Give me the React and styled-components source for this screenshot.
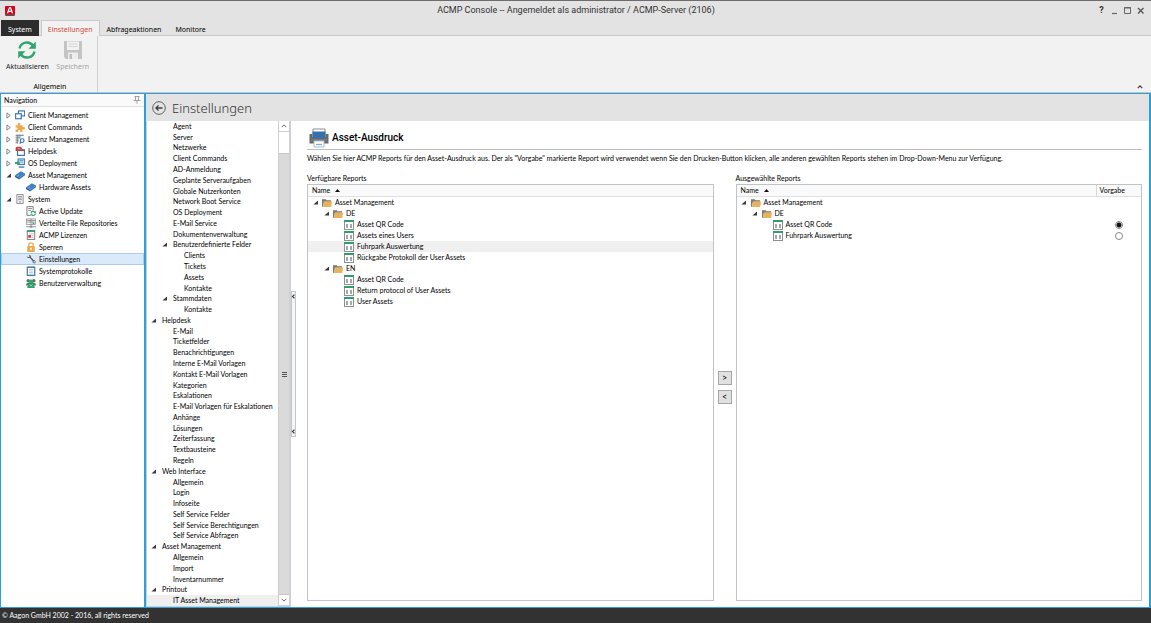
import React, { useState } from 'react'
import styled, { createGlobalStyle } from 'styled-components'

const GlobalStyle = createGlobalStyle`
  * {
    box-sizing: border-box;
  }
  body {
    margin: 0;
    font-family: Lato, sans-serif;
    font-size: 7px;
    line-height: 11px;
    color: #000;
  }
  button {
    font: inherit;
    color: inherit;
    border: 0;
    padding: 0;
    background: none;
  }
  a {
    color: inherit;
    text-decoration: none;
  }
  svg {
    display: block;
    flex: none;
  }
  ul {
    list-style: none;
    margin: 0;
    padding: 0;
  }
`

/* ---------- icons ---------- */

const Svg = ({ size = 10, width, box = 16, children }) => (
  <svg width={width || size} height={size} viewBox={`0 0 ${box} ${box}`} fill="none" aria-hidden="true">
    {children}
  </svg>
)

const LogoIcon = () => (
  <Svg size={10}>
    <rect x="0" y="0" width="16" height="16" rx="2" fill="#6d4a4c" />
    <rect x="0" y="0" width="16" height="13" rx="2" fill="#e2001a" />
    <path d="M4 11.500L7.200 2.500H8.800L12 11.500M5.300 8.500H10.700" stroke="#fff" strokeWidth="2" />
  </Svg>
)

const RefreshIcon = () => (
  <Svg size={20} box={20}>
    <path d="M2.500 8.500A7.600 7.600 0 0 1 16 5.500" stroke="#2fa56f" strokeWidth="2.400" />
    <path d="M18.800 1.500V8.800H11.500Z" fill="#2fa56f" />
    <path d="M17.500 11.500A7.600 7.600 0 0 1 4 14.500" stroke="#2fa56f" strokeWidth="2.400" />
    <path d="M1.200 18.500V11.200H8.500Z" fill="#2fa56f" />
  </Svg>
)

const SaveIcon = () => (
  <Svg size={20} box={20}>
    <path d="M1 1H19V19H3L1 17Z" fill="#c4c4c4" />
    <rect x="4" y="1.500" width="12" height="8.500" fill="#f2f2f2" />
    <path d="M5.500 4H14.500M5.500 6.500H14.500" stroke="#d4d4d4" />
    <rect x="5" y="12.500" width="10" height="6.500" fill="#ededed" />
    <rect x="6.500" y="14" width="2.500" height="5" fill="#bdbdbd" />
  </Svg>
)

const WindowsIcon = () => (
  <Svg>
    <rect x="5.500" y="1.500" width="10" height="8" fill="#fff" stroke="#2f70b5" strokeWidth="1.800" />
    <rect x="1" y="6" width="9" height="8" fill="#fff" stroke="#2f70b5" strokeWidth="1.800" />
  </Svg>
)

const PuzzleIcon = () => (
  <Svg>
    <path d="M1 5H5C4 2.500 4.800 1 6.500 1S9 2.500 8 5H12V8.500C14 7.500 16 8 16 10S14 12.500 12 11.500V16H8.500C9.200 13.500 8 12.800 6.800 12.800S4.500 13.500 5.200 16H1V12C3 12.500 4 11.800 4 10.500S3 8.500 1 9Z" fill="#eba94b" />
  </Svg>
)

const LicenseIcon = () => (
  <Svg>
    <path d="M1 2H14M1 5H8M1 8H6M1 11H6M1 14H5" stroke="#5d6670" strokeWidth="1.500" />
    <path d="M4 1V15M8 1V8" stroke="#7a828a" strokeWidth="1.200" />
    <circle cx="11.500" cy="10.500" r="3" stroke="#2f70b5" strokeWidth="1.800" />
    <path d="M9.500 13L7.500 15.500" stroke="#2f70b5" strokeWidth="1.800" />
  </Svg>
)

const HelpdeskIcon = () => (
  <Svg>
    <rect x="4" y="6" width="11" height="9" fill="#fff" stroke="#2f70b5" strokeWidth="1.800" />
    <path d="M1 8V3.500C1 1.500 3 1 6 1S11 1.500 11 3.500V5H7.500V4H4.500V8Z" fill="#d43b34" />
    <path d="M4 7H15" stroke="#d43b34" strokeWidth="2" />
  </Svg>
)

const DeployIcon = () => (
  <Svg>
    <rect x="5" y="1.500" width="10" height="9" fill="#dcebf7" stroke="#2f70b5" strokeWidth="1.600" />
    <path d="M7 4H13M7 6.500H13" stroke="#2f70b5" />
    <path d="M6 14.500H15" stroke="#2f70b5" strokeWidth="2" />
    <path d="M0 6.500H4V4L8.500 8L4 12V9.500H0Z" fill="#2fa56f" />
  </Svg>
)

const AssetIcon = () => (
  <Svg>
    <path d="M0 8.500L9.500 2L16 5.500L6.500 12.500Z" fill="#3f81c4" />
    <path d="M0 8.500L6.500 12.500V15L0 11Z" fill="#245d97" />
    <path d="M6.500 12.500L16 5.500V8.500L6.500 15Z" fill="#2f70b5" />
    <path d="M3.500 10L6.500 8" stroke="#b7d3ee" />
  </Svg>
)

const ServerIcon = () => (
  <Svg>
    <rect x="3" y="1" width="10" height="14" fill="#f4f4f4" stroke="#77797c" strokeWidth="1.300" />
    <path d="M5 4H11M5 6.500H11M5 9H11" stroke="#77797c" strokeWidth="1.200" />
    <rect x="7" y="11.500" width="2" height="2" fill="#77797c" />
  </Svg>
)

const UpdateIcon = () => (
  <Svg>
    <path d="M7 15H1.500V1H11.500V7" fill="#fff" stroke="#6a6d70" strokeWidth="1.400" />
    <path d="M3.500 4H9.500M3.500 7H8" stroke="#6a6d70" strokeWidth="1.200" />
    <path d="M8 11.500A3.500 3.500 0 0 1 14 9.500M15 12A3.500 3.500 0 0 1 9 14" stroke="#2fa56f" strokeWidth="1.800" />
    <path d="M15.800 7.500V11H12.300ZM7.300 16V12.500H10.800Z" fill="#2fa56f" />
  </Svg>
)

const RepositoriesIcon = () => (
  <Svg>
    <rect x="1" y="1.500" width="8" height="9" fill="#f4f4f4" stroke="#77797c" />
    <rect x="8" y="1.500" width="7" height="9" fill="#f4f4f4" stroke="#77797c" />
    <path d="M2 4H14M2 6.500H14" stroke="#77797c" strokeWidth="1.200" />
    <rect x="10.500" y="7.500" width="3" height="2" fill="#2fa56f" />
    <path d="M8 10.500V14M0 14H16" stroke="#77797c" strokeWidth="1.300" />
    <rect x="6" y="12.500" width="4" height="3" fill="#8d9093" />
  </Svg>
)

const LicenseDocIcon = () => (
  <Svg>
    <rect x="2" y="1" width="12" height="14" fill="#fff" stroke="#6a6d70" strokeWidth="1.400" />
    <path d="M1.500 2H14.500" stroke="#2fa56f" strokeWidth="2.500" />
    <path d="M5 6H12M9 9H12M9 12H12" stroke="#a9abad" strokeWidth="1.200" />
    <rect x="3.500" y="8" width="4.500" height="4.500" fill="#d9433b" />
  </Svg>
)

const LockIcon = () => (
  <Svg>
    <path d="M4.500 7V4.500C4.500 2.500 6 1.200 8 1.200S11.500 2.500 11.500 4.500V7" stroke="#eba94b" strokeWidth="2" />
    <rect x="2" y="6.500" width="12" height="9.500" rx="1" fill="#eba94b" />
    <rect x="7" y="9" width="2" height="4" fill="#fff" />
  </Svg>
)

const WrenchIcon = () => (
  <Svg>
    <path d="M1 3.500C1.500 6 4 7 6 6L13 14L15 12.500L8 5C8.500 3 7 1 4.500 1L6 3.500L4 5Z" fill="#55585b" />
    <circle cx="13" cy="12.500" r="1.900" fill="#dbeafa" stroke="#55585b" strokeWidth="1.300" />
  </Svg>
)

const LogIcon = () => (
  <Svg>
    <rect x="2" y="2" width="12" height="13" fill="#fff" stroke="#2f70b5" strokeWidth="1.800" />
    <path d="M5 5.500H11M5 8H11M5 10.500H11M5 13H11" stroke="#9aa7b4" />
    <path d="M4.500 0.500V3M8 0.500V3M11.500 0.500V3" stroke="#4a5560" strokeWidth="1.400" />
  </Svg>
)

const UsersIcon = () => (
  <Svg>
    <circle cx="3.500" cy="4.500" r="2.800" fill="#55796a" />
    <circle cx="12.500" cy="4.500" r="2.800" fill="#55796a" />
    <path d="M0 12C0 8.500 2 7.500 4 7.500H12C14 7.500 16 8.500 16 12Z" fill="#55796a" />
    <circle cx="8" cy="5.800" r="3.500" fill="#2fa56f" />
    <path d="M2 16C2 11 4.500 9.500 8 9.500S14 11 14 16Z" fill="#2fa56f" />
    <path d="M6 10.500L8 12.500L10 10.500" stroke="#fff" />
  </Svg>
)

const FolderIcon = () => (
  <Svg>
    <path d="M0 2H6L7.500 3.500H14.500V6H3L1.500 14H0Z" fill="#7e7a72" />
    <path d="M3.500 5.500H16L14.800 14.500H1.500Z" fill="#e8b15c" />
  </Svg>
)

const ReportIcon = () => (
  <Svg box={10}>
    <rect x="0.500" y="0.500" width="9" height="9" fill="#fff" stroke="#8d9093" />
    <rect x="0" y="0" width="10" height="2" fill="#2f9e6c" />
    <path d="M2 4H4V8H2ZM6 4H8V8H6Z" fill="#a4a7aa" />
  </Svg>
)

const PrinterIcon = () => (
  <Svg size={20} box={20}>
    <path d="M4 1H16V6H4Z" fill="#fff" stroke="#8a8d90" />
    <path d="M0.500 6H3.500V9H16.500V6H19.500V15.500H0.500Z" fill="#66696d" />
    <path d="M3.500 3.500H16.500V10H3.500Z" fill="#356fae" />
    <path d="M2 12H18" stroke="#85888c" />
    <path d="M5 13H15V19H5Z" fill="#fff" stroke="#b0bdc8" />
    <path d="M7 16.500H13" stroke="#7fb0dc" strokeWidth="1.400" />
  </Svg>
)

const BackIcon = () => (
  <Svg size={14}>
    <circle cx="8" cy="8" r="7.200" stroke="#55585b" strokeWidth="1.100" />
    <path d="M12 8H5M7.500 5L4.500 8L7.500 11" stroke="#3c3e40" strokeWidth="1.600" />
  </Svg>
)

const PinIcon = () => (
  <Svg size={8}>
    <path d="M3 1H13M5 1V8M11 1V8M1 9H15M8 9V15.500" stroke="#888" strokeWidth="1.500" />
  </Svg>
)

const ExpandedIcon = () => (
  <Svg size={5} box={6}>
    <path d="M6 0.500V5.500H0.500Z" fill="#3a3a3a" />
  </Svg>
)

const CollapsedIcon = () => (
  <Svg size={7} box={8}>
    <path d="M2.200 1L6 4L2.200 7Z" stroke="#666" fill="#fff" strokeWidth="0.900" />
  </Svg>
)

const chevrons = {
  up: 'M1 5.500L4 2.500L7 5.500',
  down: 'M1 2.500L4 5.500L7 2.500',
  left: 'M5.500 1L2.500 4L5.500 7',
}
const Chevron = ({ dir, size = 6, weight = 1 }) => (
  <Svg size={size} box={8}>
    <path d={chevrons[dir]} stroke="#3a3a3a" strokeWidth={weight} />
  </Svg>
)

const SortIcon = () => (
  <Svg size={5} box={8}>
    <path d="M0 6.500L4 1.500L8 6.500Z" fill="#111" />
  </Svg>
)

const GripIcon = () => (
  <Svg size={5} box={5}>
    <path d="M0 0.500H5M0 2.500H5M0 4.500H5" stroke="#555" />
  </Svg>
)

const windowIcons = {
  Minimieren: <path d="M2 7.500H7" stroke="#666" strokeWidth="1.200" />,
  Maximieren: <path d="M1.500 1.500H7.500V7.500H1.500ZM1 2H8" stroke="#666" />,
  'Schließen': <path d="M2 2L7.500 7.500M7.500 2L2 7.500" stroke="#555" strokeWidth="1.400" />,
}

/* ---------- window frame ---------- */

const Window = styled.div`
  display: flex;
  flex-direction: column;
  height: 100vh;
  border-top: 1px solid #6f6c6e;
  background: #e3e3e3;
`
const TitleBar = styled.header`
  display: grid;
  grid-template-columns: 1fr auto 1fr;
  align-items: center;
  height: 19px;
  padding: 0 4px 0 5px;
  font-family: Roboto, sans-serif;
  font-size: 9px;
  color: #333;
`
const WindowButtons = styled.div`
  display: flex;
  justify-content: flex-end;
  button {
    display: flex;
    align-items: center;
    justify-content: center;
    width: 13px;
    height: 13px;
    font-weight: bold;
  }
`
const Tabs = styled.nav`
  display: flex;
  height: 16px;
  padding-left: 1px;
  border-bottom: 1px solid #c9c9c9;
  font-family: "Noto Sans", sans-serif;
`
const Tab = styled.button`
  height: 16px;
  padding: 2px 6px 0;
  border: 1px solid transparent;
  border-bottom: 0;
  ${({ $active }) => $active && `
    margin-left: 2px;
    color: #d84a38;
    background: #f2f2f2;
    border-color: #c9c9c9;
  `}
  ${({ $dark }) => $dark && `
    color: #fff;
    background: #2c2c2c;
  `}
`
const Ribbon = styled.section`
  display: flex;
  justify-content: space-between;
  align-items: flex-end;
  height: 57px;
  padding-right: 8px;
  background: #f2f2f2;
  border-bottom: 1px solid #c4c4c4;
  font-family: "Noto Sans", sans-serif;
  & > button {
    padding-bottom: 2px;
  }
`
const RibbonGroup = styled.div`
  display: flex;
  flex-direction: column;
  justify-content: space-between;
  align-items: center;
  align-self: stretch;
  padding: 4px 3px 0 6px;
  border-right: 1px solid #cfcfcf;
`
const RibbonButtons = styled.div`
  display: flex;
  gap: 3px;
`
const RibbonButton = styled.button`
  display: flex;
  flex-direction: column;
  align-items: center;
  gap: 1px;
  min-width: 42px;
  color: ${({ disabled }) => (disabled ? '#a3a3a3' : '#222')};
`
const Workspace = styled.div`
  flex: 1;
  display: flex;
  min-height: 0;
  border: solid #2f9fd8;
  border-width: 1px 2px 1px 1px;
`
const StatusBar = styled.footer`
  display: flex;
  align-items: center;
  height: 15px;
  padding-left: 2px;
  color: #fff;
  background: #323232;
`

/* ---------- navigation ---------- */

const NavPanel = styled.aside`
  flex: none;
  width: 145px;
  background: #fff;
  border-right: 2px solid #2f9fd8;
`
const NavTitle = styled.div`
  display: flex;
  justify-content: space-between;
  align-items: center;
  height: 13px;
  padding: 0 3px;
  border-bottom: 1px solid #e2e2e2;
  background: #fafafa;
`
const NavList = styled.ul`
  padding-top: 2px;
`
const NavLink = styled.a`
  display: flex;
  align-items: center;
  gap: 3px;
  height: 12px;
  padding-left: ${({ $level }) => ($level ? 24 : 3)}px;
  border: 1px solid ${({ $selected }) => ($selected ? '#a9cdf0' : 'transparent')};
  background: ${({ $selected }) => ($selected ? '#dbeafa' : 'none')};
  white-space: nowrap;
`
const NavArrow = styled.span`
  display: flex;
  width: 7px;
  justify-content: center;
`

const navItems = [
  { label: 'Client Management', Icon: WindowsIcon, level: 0 },
  { label: 'Client Commands', Icon: PuzzleIcon, level: 0 },
  { label: 'Lizenz Management', Icon: LicenseIcon, level: 0 },
  { label: 'Helpdesk', Icon: HelpdeskIcon, level: 0 },
  { label: 'OS Deployment', Icon: DeployIcon, level: 0 },
  { label: 'Asset Management', Icon: AssetIcon, level: 0, open: true },
  { label: 'Hardware Assets', Icon: AssetIcon, level: 1 },
  { label: 'System', Icon: ServerIcon, level: 0, open: true },
  { label: 'Active Update', Icon: UpdateIcon, level: 1 },
  { label: 'Verteilte File Repositories', Icon: RepositoriesIcon, level: 1 },
  { label: 'ACMP Lizenzen', Icon: LicenseDocIcon, level: 1 },
  { label: 'Sperren', Icon: LockIcon, level: 1 },
  { label: 'Einstellungen', Icon: WrenchIcon, level: 1 },
  { label: 'Systemprotokolle', Icon: LogIcon, level: 1 },
  { label: 'Benutzerverwaltung', Icon: UsersIcon, level: 1 },
]

const Navigation = () => {
  const [selected, setSelected] = useState('Einstellungen')

  return (
    <NavPanel>
      <NavTitle>
        Navigation
        <button aria-label="Anheften"><PinIcon /></button>
      </NavTitle>
      <NavList>
        {navItems.map(({ label, Icon, level, open }) => (
          <li key={label}>
            <NavLink href="#" $level={level} $selected={label === selected} onClick={() => setSelected(label)}>
              {level === 0 && <NavArrow>{open ? <ExpandedIcon /> : <CollapsedIcon />}</NavArrow>}
              <Icon />
              {label}
            </NavLink>
          </li>
        ))}
      </NavList>
    </NavPanel>
  )
}

/* ---------- settings tree ---------- */

const Main = styled.main`
  flex: 1;
  display: flex;
  flex-direction: column;
  min-width: 0;
`
const MainHeader = styled.div`
  display: flex;
  align-items: center;
  gap: 6px;
  height: 27px;
  padding-left: 6px;
  background: #e3e3e3;
  h1 {
    margin: 0;
    font-family: "Noto Sans", sans-serif;
    font-size: 13px;
    font-weight: 300;
    line-height: 18px;
    color: #333;
  }
`
const MainBody = styled.div`
  flex: 1;
  display: flex;
  min-height: 0;
  background: #fff;
`
const SettingsPanel = styled.div`
  flex: none;
  display: flex;
  width: 145px;
  border: solid #cfd0d4;
  border-width: 0 2px 1px 1px;
`
const SettingsList = styled.ul`
  flex: 1;
  display: grid;
  grid-auto-rows: minmax(0, 1fr);
  min-width: 0;
  min-height: 0;
`
const SettingsLink = styled.a`
  display: flex;
  align-items: center;
  height: 100%;
  padding-left: ${({ $level }) => 4 + $level * 11}px;
  background: ${({ $selected }) => ($selected ? '#efefef' : 'none')};
  white-space: nowrap;
`
const SettingsArrow = styled.span`
  width: 11px;
`
const ScrollBar = styled.div`
  display: flex;
  flex-direction: column;
  flex: none;
  width: 11px;
  border-left: 1px solid #cfcfcf;
  background: #fff;
  button {
    display: flex;
    align-items: center;
    justify-content: center;
    height: 11px;
    border-bottom: 1px solid #cfcfcf;
  }
`
const ScrollThumb = styled.div`
  flex: 1;
  display: flex;
  align-items: center;
  justify-content: center;
  margin-top: 21px;
  border: solid #c6c6c6;
  border-width: 1px 0;
  background: #dadada;
`
const Splitter = styled.button`
  flex: none;
  display: flex;
  flex-direction: column;
  justify-content: space-between;
  align-items: center;
  align-self: center;
  width: 5px;
  height: 146px;
  padding: 2px 0;
  border: 1px solid #c6c6c6;
  background: #f3f7fb;
`

const settings = [
  [1, 'Agent'], [1, 'Server'], [1, 'Netzwerke'], [1, 'Client Commands'], [1, 'AD-Anmeldung'],
  [1, 'Geplante Serveraufgaben'], [1, 'Globale Nutzerkonten'], [1, 'Network Boot Service'],
  [1, 'OS Deployment'], [1, 'E-Mail Service'], [1, 'Dokumentenverwaltung'],
  [1, 'Benutzerdefinierte Felder', true], [2, 'Clients'], [2, 'Tickets'], [2, 'Assets'], [2, 'Kontakte'],
  [1, 'Stammdaten', true], [2, 'Kontakte'],
  [0, 'Helpdesk', true], [1, 'E-Mail'], [1, 'Ticketfelder'], [1, 'Benachrichtigungen'],
  [1, 'Interne E-Mail Vorlagen'], [1, 'Kontakt E-Mail Vorlagen'], [1, 'Kategorien'], [1, 'Eskalationen'],
  [1, 'E-Mail Vorlagen für Eskalationen'], [1, 'Anhänge'], [1, 'Lösungen'], [1, 'Zeiterfassung'],
  [1, 'Textbausteine'], [1, 'Regeln'],
  [0, 'Web Interface', true], [1, 'Allgemein'], [1, 'Login'], [1, 'Infoseite'], [1, 'Self Service Felder'],
  [1, 'Self Service Berechtigungen'], [1, 'Self Service Abfragen'],
  [0, 'Asset Management', true], [1, 'Allgemein'], [1, 'Import'], [1, 'Inventarnummer'],
  [0, 'Printout', true], [1, 'IT Asset Management'],
]

const SettingsTree = () => {
  const [selected, setSelected] = useState(settings.length - 1)

  return (
    <SettingsPanel>
      <SettingsList>
        {settings.map(([level, label, open], i) => (
          <li key={i}>
            <SettingsLink href="#" $level={level} $selected={i === selected} onClick={() => setSelected(i)}>
              <SettingsArrow>{open && <ExpandedIcon />}</SettingsArrow>
              {label}
            </SettingsLink>
          </li>
        ))}
      </SettingsList>
      <ScrollBar>
        <button aria-label="Nach oben"><Chevron dir="up" /></button>
        <ScrollThumb><GripIcon /></ScrollThumb>
        <button aria-label="Nach unten"><Chevron dir="down" /></button>
      </ScrollBar>
    </SettingsPanel>
  )
}

/* ---------- reports ---------- */

const Content = styled.section`
  flex: 1;
  display: flex;
  flex-direction: column;
  min-width: 0;
  padding: 7px 7px 6px 11px;
`
const ContentTitle = styled.div`
  display: flex;
  align-items: center;
  gap: 3px;
  padding: 0 0 1px 2px;
  border-bottom: 1px solid #bdbdbd;
  h2 {
    margin: 0;
    font-family: Roboto, sans-serif;
    font-size: 10px;
    font-weight: 500;
    line-height: 14px;
  }
`
const Description = styled.p`
  margin: 3px 0 9px;
  white-space: nowrap;
`
const Columns = styled.div`
  flex: 1;
  display: grid;
  grid-template-columns: 1fr 22px 1fr;
`
const ReportColumn = styled.div`
  display: flex;
  flex-direction: column;
  min-width: 0;
  h3 {
    margin: 0;
    font-size: 7px;
    font-weight: normal;
    line-height: 11px;
  }
`
const ReportBox = styled.div`
  flex: 1;
  border: 1px solid #c2c3c7;
`
const ReportTable = styled.table`
  width: 100%;
  border-collapse: collapse;
  th,
  td {
    height: 11px;
    padding: 0;
    line-height: 11px;
  }
  th {
    padding-left: 4px;
    font-weight: normal;
    text-align: left;
    background: #fafafa;
    border-bottom: 1px solid #e0e0e0;
  }
  th + th {
    width: 45px;
    padding-left: 3px;
    border-left: 1px solid #d8d8d8;
  }
  td + td {
    text-align: center;
  }
`
const SortHeader = styled.span`
  display: flex;
  align-items: center;
  gap: 5px;
`
const ReportRow = styled.tr`
  background: ${({ $hot }) => ($hot ? '#f0f0f0' : 'none')};
`
const ReportName = styled.span`
  display: flex;
  align-items: center;
  gap: 3px;
  padding-left: ${({ $level }) => 3 + $level * 11}px;
`
const ReportArrow = styled.span`
  display: flex;
  justify-content: center;
  width: 8px;
`
const Radio = styled.input`
  appearance: none;
  display: block;
  width: 8px;
  height: 8px;
  margin: 0 auto;
  border: 1px solid #888;
  border-radius: 50%;
  background: #fff;
  &:checked {
    background: radial-gradient(#111 2px, #fff 3px);
  }
`
const MoveButtons = styled.div`
  display: flex;
  flex-direction: column;
  justify-content: center;
  align-items: center;
  gap: 5px;
`
const MoveButton = styled.button`
  width: 14px;
  height: 14px;
  border: 1px solid #a6a6a6;
  background: #e1e1e1;
  font-size: 9px;
`

const availableReports = [
  [0, 'Asset Management'],
  [1, 'DE'],
  [2, 'Asset QR Code'],
  [2, 'Assets eines Users'],
  [2, 'Fuhrpark Auswertung'],
  [2, 'Rückgabe Protokoll der User Assets'],
  [1, 'EN'],
  [2, 'Asset QR Code'],
  [2, 'Return protocol of User Assets'],
  [2, 'User Assets'],
]
const selectedReports = [
  [0, 'Asset Management'],
  [1, 'DE'],
  [2, 'Asset QR Code'],
  [2, 'Fuhrpark Auswertung'],
]

const ReportTree = ({ title, rows, hotRow, withDefault }) => {
  const [preset, setPreset] = useState(2)

  return (
    <ReportColumn>
      <h3>{title}</h3>
      <ReportBox>
        <ReportTable aria-label={title}>
          <thead>
            <tr>
              <th><SortHeader>Name <SortIcon /></SortHeader></th>
              {withDefault && <th>Vorgabe</th>}
            </tr>
          </thead>
          <tbody>
            {rows.map(([level, label], i) => (
              <ReportRow key={i} $hot={i === hotRow}>
                <td>
                  <ReportName $level={level}>
                    <ReportArrow>{level < 2 && <ExpandedIcon />}</ReportArrow>
                    {level < 2 ? <FolderIcon /> : <ReportIcon />}
                    {label}
                  </ReportName>
                </td>
                {withDefault && (
                  <td>
                    {level === 2 && (
                      <Radio
                        type="radio"
                        name="preset"
                        aria-label={`Vorgabe: ${label}`}
                        checked={preset === i}
                        onChange={() => setPreset(i)}
                      />
                    )}
                  </td>
                )}
              </ReportRow>
            ))}
          </tbody>
        </ReportTable>
      </ReportBox>
    </ReportColumn>
  )
}

const AssetPrintout = () => (
  <Content>
    <ContentTitle>
      <PrinterIcon />
      <h2>Asset-Ausdruck</h2>
    </ContentTitle>
    <Description>
      Wählen Sie hier ACMP Reports für den Asset-Ausdruck aus. Der als "Vorgabe" markierte Report wird verwendet wenn Sie den Drucken-Button klicken, alle anderen gewählten Reports stehen im Drop-Down-Menu zur Verfügung.
    </Description>
    <Columns>
      <ReportTree title="Verfügbare Reports" rows={availableReports} hotRow={4} />
      <MoveButtons>
        <MoveButton>&gt;</MoveButton>
        <MoveButton>&lt;</MoveButton>
      </MoveButtons>
      <ReportTree title="Ausgewählte Reports" rows={selectedReports} withDefault />
    </Columns>
  </Content>
)

const App = () => (
  <>
    <GlobalStyle />
    <Window>
      <TitleBar>
        <LogoIcon />
        <span>ACMP Console -- Angemeldet als administrator / ACMP-Server (2106)</span>
        <WindowButtons>
          <button>?</button>
          {Object.entries(windowIcons).map(([name, shape]) => (
            <button key={name} aria-label={name}><Svg size={9} box={9}>{shape}</Svg></button>
          ))}
        </WindowButtons>
      </TitleBar>
      <Tabs>
        <Tab $dark>System</Tab>
        <Tab $active>Einstellungen</Tab>
        <Tab>Abfrageaktionen</Tab>
        <Tab>Monitore</Tab>
      </Tabs>
      <Ribbon>
        <RibbonGroup>
          <RibbonButtons>
            <RibbonButton><RefreshIcon />Aktualisieren</RibbonButton>
            <RibbonButton disabled><SaveIcon />Speichern</RibbonButton>
          </RibbonButtons>
          Allgemein
        </RibbonGroup>
        <button aria-label="Menüband einklappen"><Chevron dir="up" weight={1.5} /></button>
      </Ribbon>
      <Workspace>
        <Navigation />
        <Main>
          <MainHeader>
            <button aria-label="Zurück"><BackIcon /></button>
            <h1>Einstellungen</h1>
          </MainHeader>
          <MainBody>
            <SettingsTree />
            <Splitter aria-label="Bereich einklappen">
              <Chevron dir="left" size={5} weight={2} />
              <Chevron dir="left" size={5} weight={2} />
            </Splitter>
            <AssetPrintout />
          </MainBody>
        </Main>
      </Workspace>
      <StatusBar>© Aagon GmbH 2002 - 2016, all rights reserved</StatusBar>
    </Window>
  </>
)

export default App
